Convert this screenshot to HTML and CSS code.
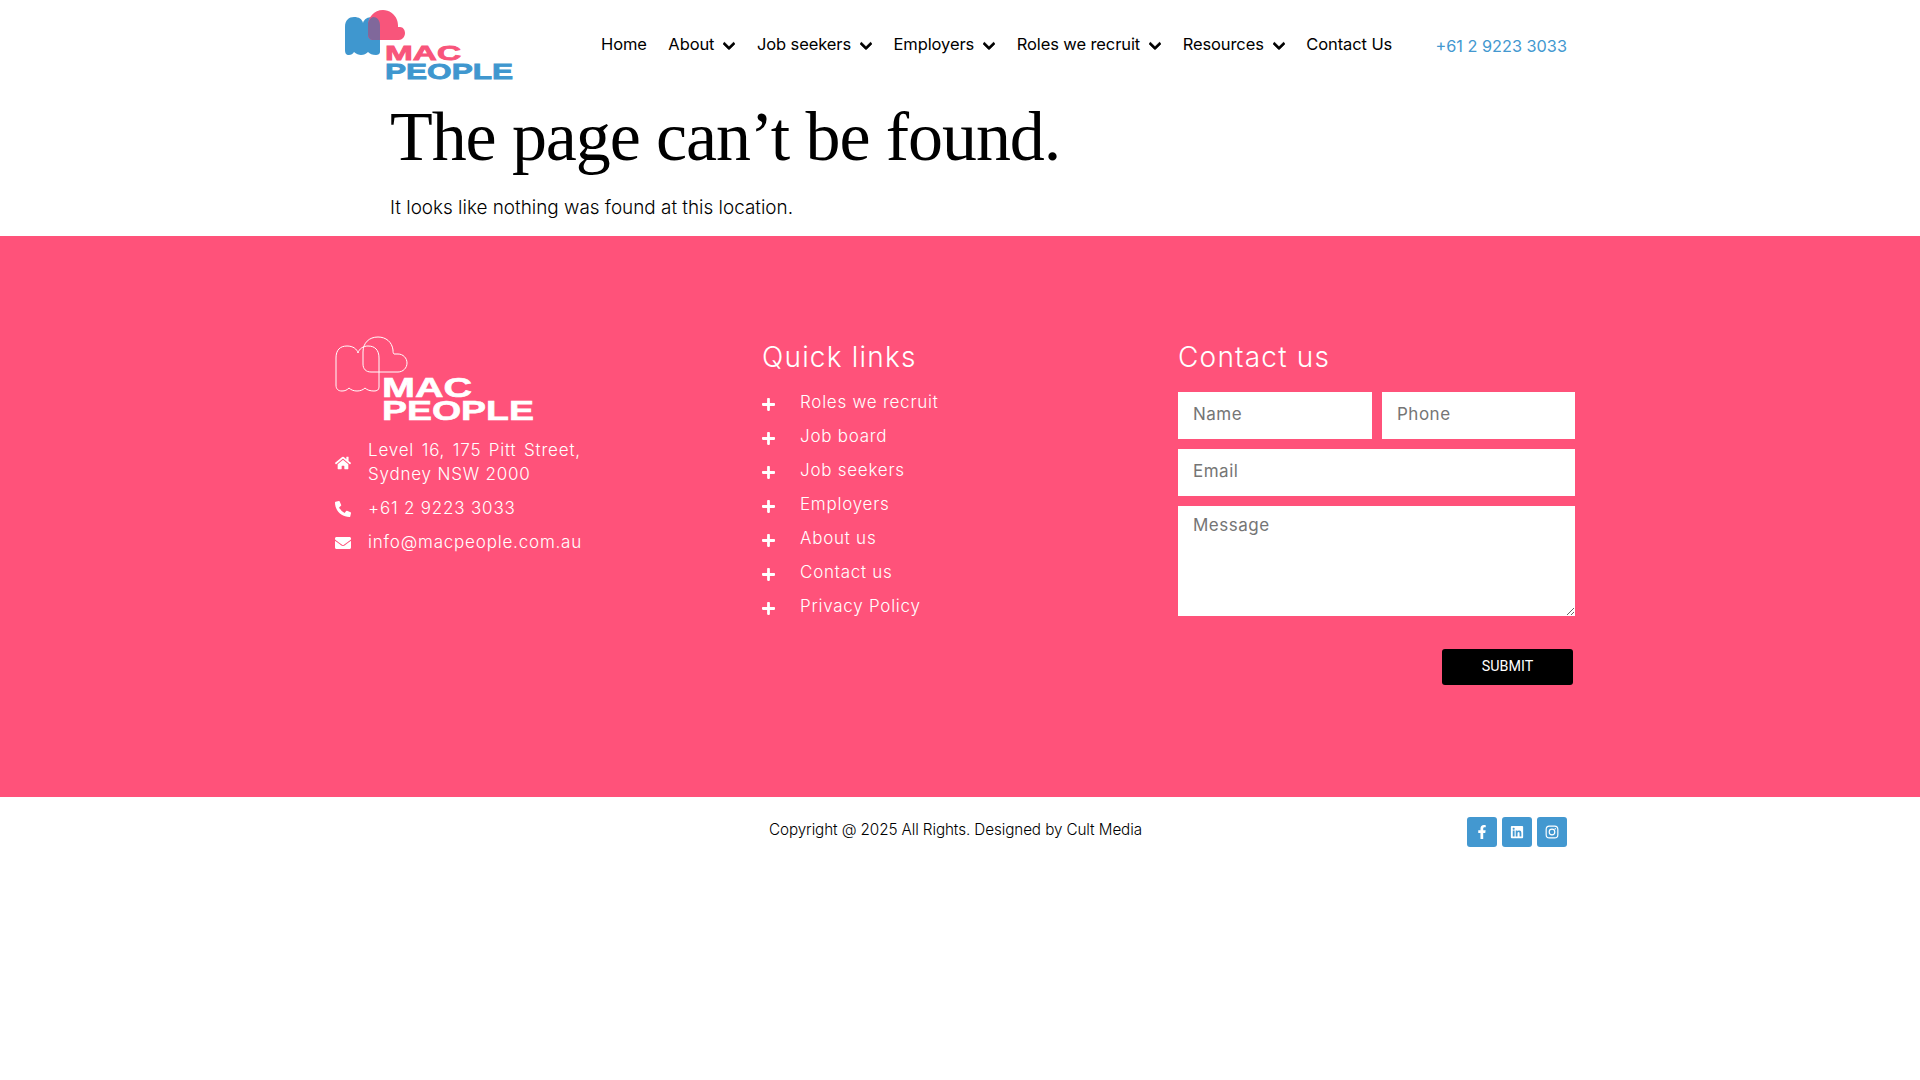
FILE: index.html
```html
<!DOCTYPE html>
<html lang="en">
<head>
<meta charset="utf-8">
<title>Page not found – Mac People</title>
<link rel="stylesheet" href="styles.css">
</head>
<body>
<header class="site-header">
  <div class="header-inner">
    <svg class="logo" width="170" height="72" viewBox="0 0 170 72">
      <path fill="#3f97cf" d="M0 10C0 3 4 0 9 0c5 0 8 2 9 6 1-4 5-6 9-6 5 0 8 3 8 9v26c0 2-2 3-4 3-4 0-6-1-8-3-2 2-4 3-7 3-2 0-5-1-7-3-1 2-3 3-5 3-3 0-4-2-4-5z" transform="translate(0 7)"/>
      <path fill="#f8557b" d="M23 24V16C23 7 29 0 38 0c6 0 12 4 14 10 1 3 1 5 1 7h2c3 0 5 3 5 6 0 4-3 7-6 7H29c-4 0-6-2-6-6z"/>
      <path fill="#80689b" d="M23 13c1-4 4-6 5-6 4 0 7 3 7 9v14h-6c-4 0-6-2-6-6z"/>
      <text class="logo-word logo-pink" x="40" y="50" textLength="76" lengthAdjust="spacingAndGlyphs">MAC</text>
      <text class="logo-word logo-blue" x="40" y="69" textLength="128" lengthAdjust="spacingAndGlyphs">PEOPLE</text>
    </svg>
    <nav class="main-nav">
      <a class="nav-link">Home</a>
      <a class="nav-link">About <svg class="chev" viewBox="0 0 448 512"><use href="#i-chev"/></svg></a>
      <a class="nav-link">Job seekers <svg class="chev" viewBox="0 0 448 512"><use href="#i-chev"/></svg></a>
      <a class="nav-link">Employers <svg class="chev" viewBox="0 0 448 512"><use href="#i-chev"/></svg></a>
      <a class="nav-link">Roles we recruit <svg class="chev" viewBox="0 0 448 512"><use href="#i-chev"/></svg></a>
      <a class="nav-link">Resources <svg class="chev" viewBox="0 0 448 512"><use href="#i-chev"/></svg></a>
      <a class="nav-link">Contact Us</a>
    </nav>
    <a class="header-phone">+61 2 9223 3033</a>
  </div>
</header>

<main class="not-found">
  <h1 class="nf-title">The page can’t be found.</h1>
  <p class="nf-text">It looks like nothing was found at this location.</p>
</main>

<footer class="site-footer">
  <div class="footer-inner">
    <div class="f-col">
      <svg class="f-logo" width="200" height="86" viewBox="0 0 200 86">
        <g fill="none" stroke="#fff" stroke-width="1">
          <path d="M1 22c0-8 4-12 11-12 6 0 10 3 11 7 1-4 5-7 10-7 7 0 11 4 11 12v29c0 3-2 4-5 4-4 0-7-1-9-3-2 2-5 3-8 3s-6-1-8-3c-2 2-4 3-7 3-4 0-6-2-6-6z"/>
          <path d="M28 28V16C28 7 34 1 43 1c8 0 14 5 15 13 0 2 0 3 1 4h4c5 0 9 4 9 9 0 5-4 9-9 9H36c-5 0-8-3-8-8z"/>
        </g>
        <text class="logo-word logo-white" x="47" y="61" textLength="90" lengthAdjust="spacingAndGlyphs">MAC</text>
        <text class="logo-word logo-white" x="47" y="84" textLength="152" lengthAdjust="spacingAndGlyphs">PEOPLE</text>
      </svg>
      <ul class="contact-list">
        <li class="contact-item"><svg class="c-ico" viewBox="0 0 576 512"><path d="M280.37 148.26L96 300.11V464a16 16 0 0 0 16 16l112.06-.29a16 16 0 0 0 15.92-16V368a16 16 0 0 1 16-16h64a16 16 0 0 1 16 16v95.64a16 16 0 0 0 16 16.05L464 480a16 16 0 0 0 16-16V300L295.67 148.26a12.19 12.19 0 0 0-15.3 0zM571.6 251.47L488 182.56V44.05a12 12 0 0 0-12-12h-56a12 12 0 0 0-12 12v72.61L318.47 43a48 48 0 0 0-61 0L4.34 251.47a12 12 0 0 0-1.6 16.9l25.5 31A12 12 0 0 0 45.15 301l235.22-193.74a12.19 12.19 0 0 1 15.3 0L530.9 301a12 12 0 0 0 16.9-1.6l25.5-31a12 12 0 0 0-1.7-16.93z"/></svg><span><span class="addr-first">Level 16, 175 Pitt Street,</span><br>Sydney NSW 2000</span></li>
        <li class="contact-item"><svg class="c-ico" viewBox="0 0 512 512"><path d="M497.39 361.8l-112-48a24 24 0 0 0-28 6.9l-49.6 60.6A370.66 370.66 0 0 1 130.6 204.11l60.6-49.6a23.94 23.94 0 0 0 6.9-28l-48-112A24.16 24.16 0 0 0 122.6.61l-104 24A24 24 0 0 0 0 48c0 256.5 207.9 464 464 464a24 24 0 0 0 23.4-18.6l24-104a24.29 24.29 0 0 0-14.01-27.6z"/></svg><span>+61 2 9223 3033</span></li>
        <li class="contact-item"><svg class="c-ico" viewBox="0 0 512 512"><path d="M502.3 190.8c3.9-3.1 9.7-.2 9.7 4.7V400c0 26.5-21.5 48-48 48H48c-26.5 0-48-21.5-48-48V195.6c0-5 5.7-7.8 9.7-4.7 22.4 17.4 52.1 39.5 154.1 113.6 21.1 15.4 56.7 47.8 92.2 47.6 35.7.3 72-32.8 92.3-47.6 102-74.1 131.6-96.3 154-113.7zM256 320c23.2.4 56.6-29.2 73.4-41.4 132.7-96.3 142.8-104.7 173.4-128.7 5.8-4.5 9.2-11.5 9.2-18.9v-19c0-26.5-21.5-48-48-48H48C21.5 64 0 85.5 0 112v19c0 7.4 3.4 14.3 9.2 18.9 30.6 23.9 40.7 32.4 173.4 128.7 16.8 12.2 50.2 41.8 73.4 41.4z"/></svg><span>info@macpeople.com.au</span></li>
      </ul>
    </div>
    <div class="f-col">
      <h2 class="f-heading">Quick links</h2>
      <ul class="link-list">
        <li class="link-item"><svg class="plus" viewBox="0 0 448 512"><use href="#i-plus"/></svg><span>Roles we recruit</span></li>
        <li class="link-item"><svg class="plus" viewBox="0 0 448 512"><use href="#i-plus"/></svg><span>Job board</span></li>
        <li class="link-item"><svg class="plus" viewBox="0 0 448 512"><use href="#i-plus"/></svg><span>Job seekers</span></li>
        <li class="link-item"><svg class="plus" viewBox="0 0 448 512"><use href="#i-plus"/></svg><span>Employers</span></li>
        <li class="link-item"><svg class="plus" viewBox="0 0 448 512"><use href="#i-plus"/></svg><span>About us</span></li>
        <li class="link-item"><svg class="plus" viewBox="0 0 448 512"><use href="#i-plus"/></svg><span>Contact us</span></li>
        <li class="link-item"><svg class="plus" viewBox="0 0 448 512"><use href="#i-plus"/></svg><span>Privacy Policy</span></li>
      </ul>
    </div>
    <div class="f-col">
      <h2 class="f-heading">Contact us</h2>
      <form class="contact-form">
        <input class="field" type="text" placeholder="Name">
        <input class="field" type="text" placeholder="Phone">
        <input class="field field-wide" type="text" placeholder="Email">
        <textarea class="field field-wide field-area" placeholder="Message"></textarea>
        <button class="submit" type="button">SUBMIT</button>
      </form>
    </div>
  </div>
</footer>

<div class="bottom-bar">
  <p class="copyright">Copyright @ 2025 All Rights. Designed by Cult Media</p>
  <div class="socials">
    <a class="social"><svg class="s-ico" viewBox="0 0 320 512"><path d="M279.14 288l14.22-92.66h-88.91v-60.13c0-25.35 12.42-50.06 52.24-50.06h40.42V6.26S260.43 0 225.36 0c-73.22 0-121.08 44.38-121.08 124.72v70.62H22.89V288h81.39v224h100.17V288z"/></svg></a>
    <a class="social"><svg class="s-ico" viewBox="0 0 448 512"><path d="M416 32H31.9C14.3 32 0 46.5 0 64.3v383.4C0 465.5 14.3 480 31.9 480H416c17.6 0 32-14.5 32-32.3V64.3c0-17.8-14.4-32.3-32-32.3zM135.4 416H69V202.2h66.5V416zm-33.2-243c-21.3 0-38.5-17.3-38.5-38.5S80.9 96 102.2 96c21.2 0 38.5 17.3 38.5 38.500 0 21.300-17.200 38.500-38.500 38.500zm282.100 243h-66.400V312c0-24.800-.5-56.700-34.500-56.700-34.600 0-39.900 27-39.900 54.900V416h-66.400V202.200h63.700v29.200h.9c8.900-16.800 30.600-34.500 62.900-34.500 67.200 0 79.700 44.300 79.700 101.900V416z"/></svg></a>
    <a class="social"><svg class="s-ico s-insta" viewBox="0 0 24 24"><rect x="2" y="2" width="20" height="20" rx="5.500"/><circle cx="12" cy="12" r="4.800"/><circle class="s-dot" cx="17.600" cy="6.400" r="1.200"/></svg></a>
  </div>
</div>

<svg class="sprite" width="0" height="0">
  <symbol id="i-chev" viewBox="0 0 448 512"><path d="M207.029 381.476L12.686 187.132c-9.373-9.373-9.373-24.569 0-33.941l22.667-22.667c9.357-9.357 24.522-9.375 33.901-.04L224 284.505l154.745-154.021c9.379-9.335 24.544-9.317 33.901.04l22.667 22.667c9.373 9.373 9.373 24.569 0 33.941L240.971 381.476c-9.373 9.372-24.569 9.372-33.942 0z"/></symbol>
  <symbol id="i-plus" viewBox="0 0 448 512"><path d="M416 208H272V64c0-17.670-14.330-32-32-32h-32c-17.670 0-32 14.330-32 32v144H32c-17.670 0-32 14.330-32 32v32c0 17.670 14.330 32 32 32h144v144c0 17.670 14.330 32 32 32h32c17.670 0 32-14.330 32-32V304h144c17.670 0 32-14.330 32-32v-32c0-17.670-14.330-32-32-32z"/></symbol>
</svg>
</body>
</html>
```
FILE: styles.css
```css
* { box-sizing: border-box; }
html, body { margin: 0; padding: 0; background: #fff; }
body { font-family: "Inter", "Liberation Sans", sans-serif; color: #000; }
ul { list-style: none; margin: 0; padding: 0; }
.sprite { display: block; height: 0; }

.site-header { height: 90px; }
.header-inner {
  width: 1250px; margin: 0 auto; padding: 0 18px 0 10px;
  display: flex; align-items: flex-start;
}
.logo { margin-top: 10px; flex: none; display: block; overflow: visible; }
.logo-word { font-family: "Liberation Sans", sans-serif; font-weight: 700; }
.logo-pink { fill: #f8557b; font-size: 21px; stroke: #f8557b; stroke-width: .8px; }
.logo-blue { fill: #3f97cf; font-size: 22px; stroke: #3f97cf; stroke-width: .8px; }
.logo-white { fill: #fff; font-size: 28px; stroke: #fff; stroke-width: .6px; }

.main-nav { display: flex; gap: 21.500px; margin-left: 86px; padding-top: 34px; }
.nav-link {
  font-family: "Inter", sans-serif; font-size: 16.500px; line-height: 20px;
  letter-spacing: -.1px; color: #000; white-space: nowrap;
  display: flex; align-items: center; gap: 9px;
}
.chev { width: 12px; height: 14px; fill: #000; stroke: #000; stroke-width: 30px; margin-top: 3px; }
.header-phone {
  font-family: "Inter", sans-serif; font-size: 16.300px; line-height: 20px;
  color: #4398d0; margin-left: auto; margin-top: 36px; white-space: nowrap;
}

.not-found { width: 1140px; margin: 0 auto; height: 146px; padding-top: 17px; }
.nf-title {
  font-family: "Liberation Serif", serif; font-weight: 400; font-size: 70px;
  line-height: 60px; letter-spacing: -1.100px; margin: 0; color: #000;
}
.nf-text {
  font-family: "Inter", sans-serif; font-weight: 300; font-size: 18.900px; line-height: 24px;
  margin: 29px 0 0; color: #000;
}

.site-footer { background: #ff527a; height: 561px; padding-top: 100px; color: #fff; }
.footer-inner {
  width: 1250px; margin: 0 auto;
  display: grid; grid-template-columns: 427px 416px 1fr;
}
.f-logo { display: block; overflow: visible; }
.contact-list { margin-top: 16px; }
.contact-item {
  display: flex; align-items: center; margin-bottom: 10px;
  font-size: 17px; line-height: 24px; letter-spacing: .8px;
  font-family: "Inter", sans-serif; font-weight: 300;
}
.addr-first { word-spacing: 2px; }
.c-ico { width: 16px; height: 16px; fill: #fff; flex: none; margin: 2px 17px 0 0; }
.f-heading {
  font-family: "Inter", sans-serif; font-weight: 300; font-size: 28px; line-height: 34px;
  letter-spacing: 1.200px; margin: 4px 0 0; color: #fff;
}
.link-list { margin-top: 11px; }
.link-item {
  display: flex; align-items: center; height: 34px;
  font-size: 17px; letter-spacing: .75px; font-weight: 300;
}
.plus { width: 13px; height: 15px; fill: #fff; flex: none; margin: 4px 25px 0 0; }

.contact-form {
  display: grid; grid-template-columns: 194px 193px; gap: 10px; margin-top: 18px;
}
.field {
  display: block; width: 100%; height: 47px; border: 0; border-radius: 0; background: #fff;
  padding: 0 15px 4px; font-family: "Inter", sans-serif; font-size: 17px; letter-spacing: .5px;
  outline: 0; margin: 0; color: #333;
}
.field::placeholder { color: #757575; opacity: 1; }
.field-wide { grid-column: 1 / -1; }
.field-area { height: 110px; padding: 7px 15px; line-height: 24px; resize: vertical; }
.submit {
  grid-column: 1 / -1; justify-self: end; margin: 23px 2px 0 0;
  width: 131px; height: 36px; background: #000; color: #fff; border: 0; border-radius: 3px;
  font-family: "Roboto", sans-serif; font-size: 14.300px; padding: 0 0 3px;
}

.bottom-bar {
  width: 1250px; margin: 0 auto; padding: 20px 18px 0 0;
  display: flex; justify-content: space-between; align-items: flex-start;
}
.copyright {
  margin: 0 0 0 434px; font-size: 15.250px; line-height: 26px; font-family: "Inter", sans-serif;
  font-weight: 300; letter-spacing: -.1px; color: #000; white-space: nowrap;
}
.socials { display: flex; gap: 5px; }
.social {
  width: 30px; height: 30px; border-radius: 3px; background: #4398d0;
  display: flex; align-items: center; justify-content: center;
}
.s-ico { width: 14px; height: 14px; fill: #fff; }
.s-insta { fill: none; stroke: #fff; stroke-width: 2px; }
.s-dot { fill: #fff; stroke: none; }
```
